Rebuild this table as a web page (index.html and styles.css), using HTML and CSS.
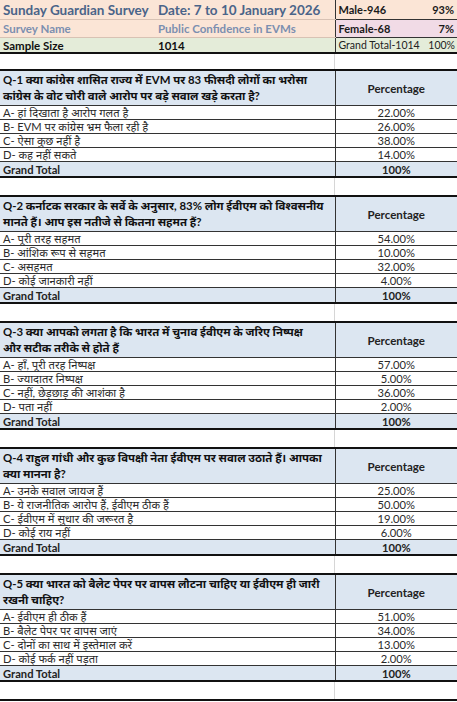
FILE: index.html
```html
<!DOCTYPE html>
<html lang="hi">
<head>
  <meta charset="UTF-8" />
  <title>Sunday Guardian Survey</title>
  <link rel="stylesheet" href="styles.css">
</head>
<body>

  <div class="sheet">
    <table class="info">
      <colgroup>
        <col class="col-a" />
        <col class="col-b" />
        <col class="col-side" />
      </colgroup>
      <tr class="row-title">
        <td>Sunday Guardian Survey</td>
        <td>Date: 7 to 10 January 2026</td>
        <td class="side"><div class="split"><span>Male-946</span><span>93%</span></div></td>
      </tr>
      <tr class="row-name">
        <td>Survey Name</td>
        <td>Public Confidence in EVMs</td>
        <td class="side female"><div class="split"><span>Female-68</span><span>7%</span></div></td>
      </tr>
      <tr class="row-sample">
        <td>Sample Size</td>
        <td>1014</td>
        <td class="side total"><div class="split"><span>Grand Total-1014</span><span>100%</span></div></td>
      </tr>
    </table>

    <div class="gap first"><div></div><div></div></div>

    <table class="q">
      <colgroup><col class="col-q" /><col class="col-side" /></colgroup>
      <tr class="q-head">
        <td class="ques">Q-1 क्या कांग्रेस शासित राज्य में EVM पर 83 फीसदी लोगों का भरोसा<br>कांग्रेस के वोट चोरी वाले आरोप पर बड़े सवाल खड़े करता है?</td>
        <td class="pct">Percentage</td>
      </tr>
      <tr><td>A- हां दिखाता है आरोप गलत है</td><td class="pct">22.00%</td></tr>
      <tr><td>B- EVM पर कांग्रेस भ्रम फैला रही है</td><td class="pct">26.00%</td></tr>
      <tr><td>C- ऐसा कुछ नहीं है</td><td class="pct">38.00%</td></tr>
      <tr><td>D- कह नहीं सकते</td><td class="pct">14.00%</td></tr>
      <tr class="total"><td>Grand Total</td><td class="pct">100%</td></tr>
    </table>

    <div class="gap"><div></div><div></div></div>

    <table class="q">
      <colgroup><col class="col-q" /><col class="col-side" /></colgroup>
      <tr class="q-head">
        <td class="ques">Q-2 कर्नाटक सरकार के सर्वे के अनुसार, 83% लोग ईवीएम को विश्वसनीय<br>मानते हैं। आप इस नतीजे से कितना सहमत हैं?</td>
        <td class="pct">Percentage</td>
      </tr>
      <tr><td>A- पूरी तरह सहमत</td><td class="pct">54.00%</td></tr>
      <tr><td>B- आंशिक रूप से सहमत</td><td class="pct">10.00%</td></tr>
      <tr><td>C- असहमत</td><td class="pct">32.00%</td></tr>
      <tr><td>D- कोई जानकारी नहीं</td><td class="pct">4.00%</td></tr>
      <tr class="total"><td>Grand Total</td><td class="pct">100%</td></tr>
    </table>

    <div class="gap"><div></div><div></div></div>

    <table class="q">
      <colgroup><col class="col-q" /><col class="col-side" /></colgroup>
      <tr class="q-head">
        <td class="ques">Q-3 क्या आपको लगता है कि भारत में चुनाव ईवीएम के जरिए निष्पक्ष<br>और सटीक तरीके से होते हैं</td>
        <td class="pct">Percentage</td>
      </tr>
      <tr><td>A- हाँ, पूरी तरह निष्पक्ष</td><td class="pct">57.00%</td></tr>
      <tr><td>B- ज्यादातर निष्पक्ष</td><td class="pct">5.00%</td></tr>
      <tr><td>C- नहीं, छेड़छाड़ की आशंका है</td><td class="pct">36.00%</td></tr>
      <tr><td>D- पता नहीं</td><td class="pct">2.00%</td></tr>
      <tr class="total"><td>Grand Total</td><td class="pct">100%</td></tr>
    </table>

    <div class="gap"><div></div><div></div></div>

    <table class="q">
      <colgroup><col class="col-q" /><col class="col-side" /></colgroup>
      <tr class="q-head">
        <td class="ques">Q-4 राहुल गांधी और कुछ विपक्षी नेता ईवीएम पर सवाल उठाते हैं। आपका<br>क्या मानना है?</td>
        <td class="pct">Percentage</td>
      </tr>
      <tr><td>A- उनके सवाल जायज हैं</td><td class="pct">25.00%</td></tr>
      <tr><td>B- ये राजनीतिक आरोप हैं, ईवीएम ठीक हैं</td><td class="pct">50.00%</td></tr>
      <tr><td>C- ईवीएम में सुधार की जरूरत है</td><td class="pct">19.00%</td></tr>
      <tr><td>D- कोई राय नहीं</td><td class="pct">6.00%</td></tr>
      <tr class="total"><td>Grand Total</td><td class="pct">100%</td></tr>
    </table>

    <div class="gap"><div></div><div></div></div>

    <table class="q">
      <colgroup><col class="col-q" /><col class="col-side" /></colgroup>
      <tr class="q-head">
        <td class="ques">Q-5 क्या भारत को बैलेट पेपर पर वापस लौटना चाहिए या ईवीएम ही जारी<br>रखनी चाहिए?</td>
        <td class="pct">Percentage</td>
      </tr>
      <tr><td>A- ईवीएम ही ठीक हैं</td><td class="pct">51.00%</td></tr>
      <tr><td>B- बैलेट पेपर पर वापस जाएं</td><td class="pct">34.00%</td></tr>
      <tr><td>C- दोनों का साथ में इस्तेमाल करें</td><td class="pct">13.00%</td></tr>
      <tr><td>D- कोई फर्क नहीं पड़ता</td><td class="pct">2.00%</td></tr>
      <tr class="total"><td>Grand Total</td><td class="pct">100%</td></tr>
    </table>

    <div class="gap"><div></div><div></div></div>
    <div class="next-edge"></div>
  </div>

</body>
</html>
```

FILE: styles.css
```css
body {
  margin: 0;
  background: #ffffff;
  font-family: Lato, "Noto Sans", "Noto Sans Devanagari", sans-serif;
  color: #111;
}

.sheet {
  width: 457px;
}

table {
  width: 457px;
  border-collapse: collapse;
  table-layout: fixed;
}

td {
  padding: 0 3px;
  white-space: nowrap;
  overflow: hidden;
  vertical-align: middle;
}

.col-a { width: 155px; }
.col-b { width: 180px; }
.col-q { width: 335px; }
.col-side { width: 122px; }

/* top info block */
.info {
  border-bottom: 2px solid #111;
}

.info tr {
  background: #fbe5d6;
}

.info td {
  font-weight: bold;
}

.row-title td {
  height: 19px;
  font-size: 13.5px;
  color: #4a6489;
  border-bottom: 1px solid #d8c2b4;
}

.row-name td {
  height: 17px;
  font-size: 11.5px;
  color: #7b8fb0;
  border-bottom: 1px solid #d8c2b4;
}

.row-sample {
  background: #e4ecd9 !important;
}

.row-sample td {
  height: 14px;
  font-size: 11.5px;
  color: #111;
}

.info td.side {
  font-size: 11px;
  color: #1a1a1a;
  border-left: 1px solid #333;
  border-bottom: 1px solid #333;
}

.info td.female {
  background: #f1dbe6;
}

.info td.total {
  font-weight: normal;
  font-size: 10.5px;
  color: #222;
  padding-right: 2px;
}

.split {
  display: flex;
  justify-content: space-between;
}

/* blank spreadsheet rows */
.gap {
  display: grid;
  grid-template-columns: 335px 1fr;
  height: 17px;
}

.gap.first {
  height: 15px;
}

.gap div:first-child {
  border-right: 1px solid #d6d6d6;
}

.next-edge {
  border-top: 2px solid #111;
}

/* question tables */
.q {
  border-top: 2px solid #111;
  border-bottom: 2px solid #111;
}

.q td {
  height: 13px;
  line-height: 13px;
  font-size: 11.2px;
  color: #2a2a2a;
  border-bottom: 1px solid #333;
}

.q td.pct {
  text-align: center;
  border-left: 1px solid #333;
}

.q-head td {
  height: 34px;
  background: #dce6f1;
}

.q-head td.ques {
  font-weight: bold;
  color: #111;
  line-height: 16px;
  font-size: 11.4px;
}

.q-head td.pct {
  font-weight: bold;
  font-size: 11.5px;
  color: #222;
}

.total td {
  height: 14px;
  background: #dce6f1;
  font-weight: bold;
  color: #222;
}
```
